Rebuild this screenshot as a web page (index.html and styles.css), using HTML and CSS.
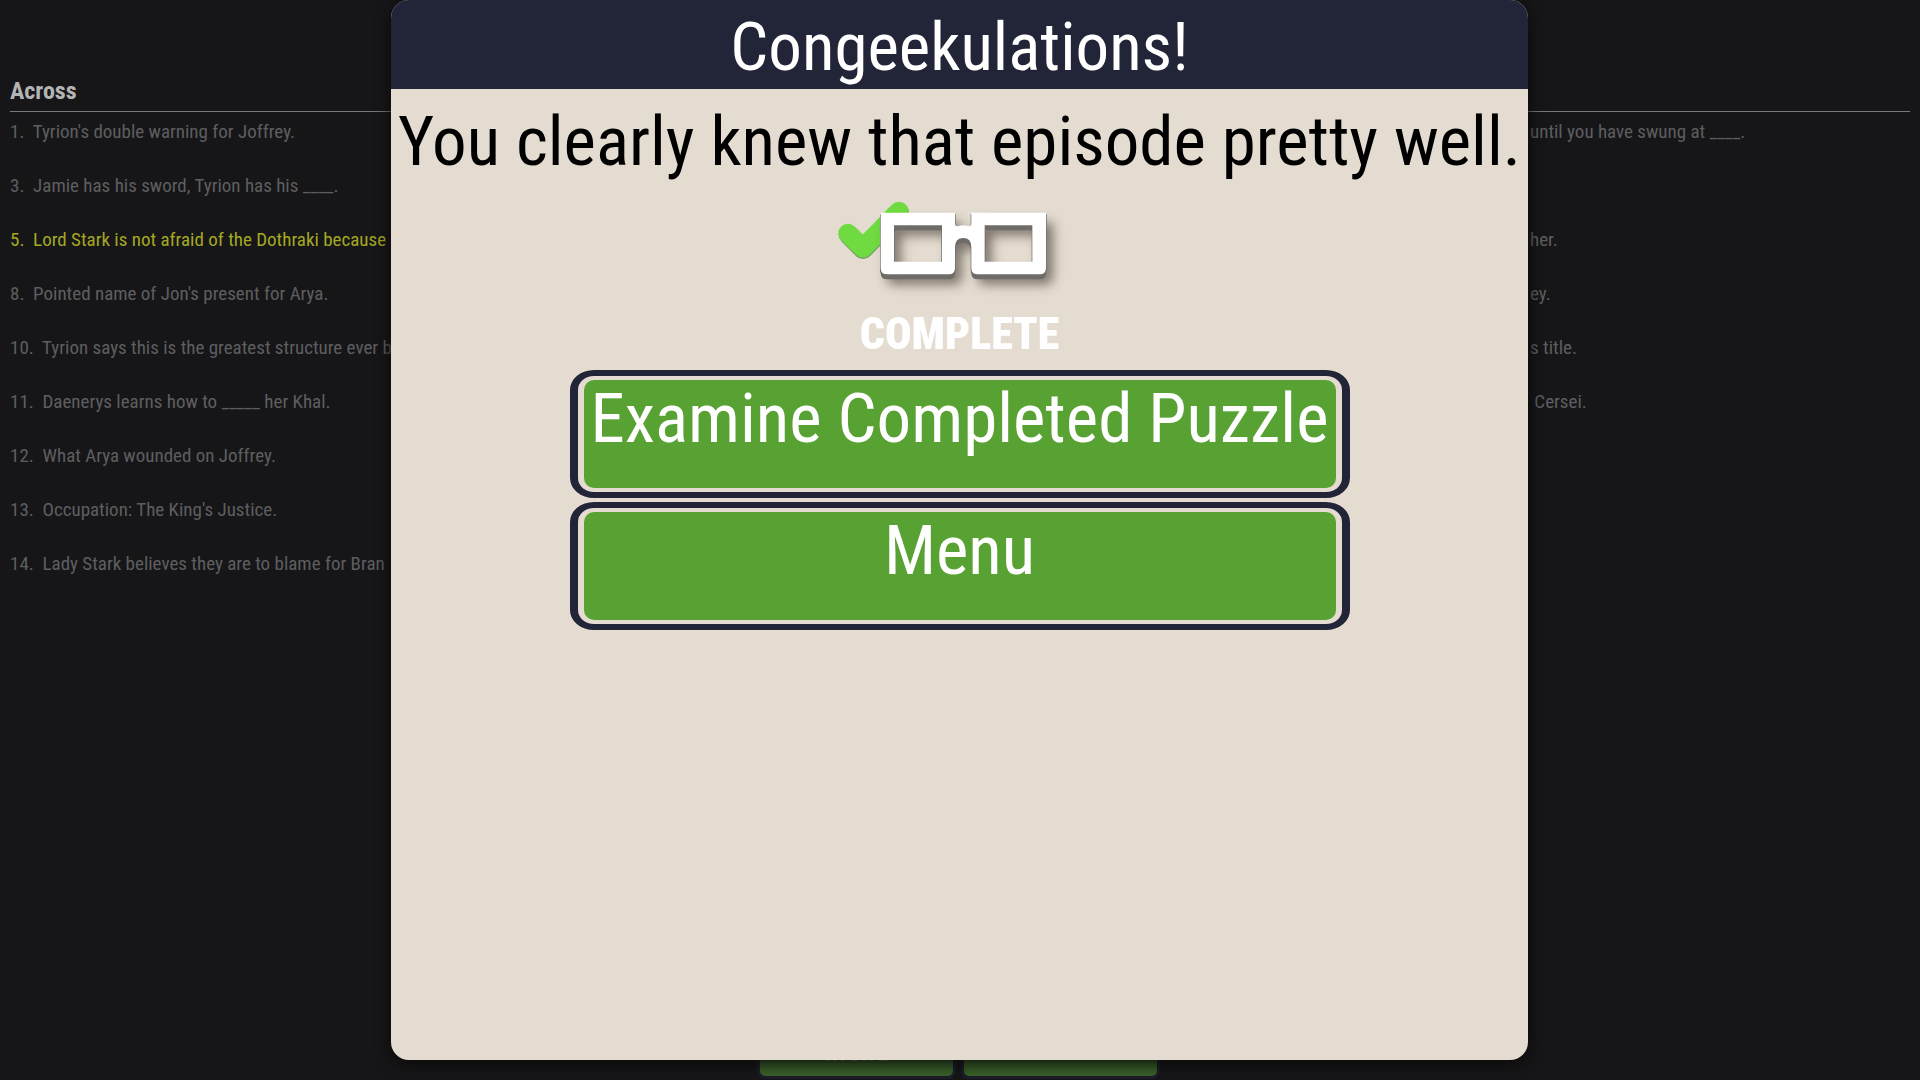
FILE: index.html
```
<!DOCTYPE html>
<html lang="en">
<head>
    <meta charset="UTF-8">
    <meta name="viewport" content="width=device-width, initial-scale=1.0">
    <title>Crossword</title>
    <link rel="stylesheet" href="styles.css">
</head>
<body>
    <main class="puzzle">
        <h2 class="clues_title">Across</h2>
        <div class="clues">
            <ul class="clue_list">
                <li>1.  Tyrion's double warning for Joffrey.</li>
                <li>3.  Jamie has his sword, Tyrion has his ____.</li>
                <li class="active">5.  Lord Stark is not afraid of the Dothraki because</li>
                <li>8.  Pointed name of Jon's present for Arya.</li>
                <li>10.  Tyrion says this is the greatest structure ever b</li>
                <li>11.  Daenerys learns how to _____ her Khal.</li>
                <li>12.  What Arya wounded on Joffrey.</li>
                <li>13.  Occupation: The King's Justice.</li>
                <li>14.  Lady Stark believes they are to blame for Bran</li>
            </ul>
            <ul class="clue_list">
                <li>until you have swung at ____.</li>
                <li></li>
                <li>her.</li>
                <li>ey.</li>
                <li>s title.</li>
                <li> Cersei.</li>
            </ul>
        </div>
    </main>

    <div class="toolbar">
        <button class="tool" type="button">Menu</button>
        <button class="tool" type="button"></button>
    </div>

    <div class="popup" role="dialog" aria-labelledby="popup_title">
        <h1 class="popup_title" id="popup_title">Congeekulations!</h1>
        <div class="popup_body">
            <p class="message">You clearly knew that episode pretty well.</p>
            <svg class="badge" viewBox="28 9 780 381" aria-hidden="true">
                <defs>
                    <filter id="soft" x="-20%" y="-20%" width="150%" height="160%">
                        <feGaussianBlur stdDeviation="18"/>
                    </filter>
                    <path id="glasses" fill-rule="evenodd" d="M180 98H403V130Q403 141 413 138Q428 134 442 138Q452 141 452 130V98H676V263Q676 283 656 283H472Q452 283 452 263V202Q452 174 428 174Q403 174 403 202V263Q403 283 383 283H200Q180 283 180 263ZM220 136V245H364V136ZM492 136V245H635V136Z"/>
                </defs>
                <g fill="none" stroke-width="58" stroke-linecap="round" stroke-linejoin="round">
                    <path d="M83 164L127 208L236 98" stroke="#6f9a62"/>
                    <path d="M82 160L127 204L235 94" stroke="#6fdb40"/>
                </g>
                <use href="#glasses" x="20" y="30" fill="#4a4038" opacity=".7" filter="url(#soft)"/>
                <g fill="#6e6c69">
                    <use href="#glasses" x="-2" y="5"/>
                    <use href="#glasses" x="2" y="5"/>
                    <use href="#glasses" y="10"/>
                    <use href="#glasses" y="15"/>
                </g>
                <use href="#glasses" fill="#fff"/>
            </svg>
            <p class="complete">COMPLETE</p>
            <div class="choices">
                <button class="choice" type="button">Examine Completed Puzzle</button>
                <button class="choice" type="button">Menu</button>
            </div>
        </div>
    </div>
</body>
</html>
```
FILE: styles.css
```
* {
  margin: 0;
  padding: 0;
  box-sizing: border-box;
}

body {
  height: 100vh;
  overflow: hidden;
  background-color: #161618;
  color: #5e5e60;
  font-family: "Roboto Condensed", Roboto, sans-serif;
}

/* puzzle behind the popup */
.puzzle {
  padding: 76px 10px 0;
}

.clues_title {
  padding-bottom: 5px;
  border-bottom: 1px solid #777778;
  color: #b4b4b5;
  font-size: 24px;
  line-height: 30px;
}

.clues {
  display: grid;
  grid-template-columns: 80% 1fr;
}

.clue_list {
  list-style: none;
  font-size: 19px;
  line-height: 40px;
}

.clue_list li {
  height: 40px;
  margin-bottom: 14px;
  white-space: pre;
}

.clue_list .active {
  color: #a4a822;
}

.toolbar {
  position: fixed;
  bottom: 1px;
  left: 0;
  right: 3px;
  display: flex;
  justify-content: center;
  gap: 5px;
}

.tool {
  display: flex;
  justify-content: center;
  width: 199px;
  height: 64px;
  padding: 15px 0;
  border: 3px solid #1c1c2c;
  border-radius: 8px;
  background-color: #3a6329;
  color: #8a9a84;
  font-family: inherit;
  font-size: 30px;
  line-height: 36px;
}

.popup {
  position: fixed;
  top: 0;
  left: 0;
  right: 1px;
  width: 1137px;
  max-width: 100%;
  height: calc(100vh - 20px);
  margin: 0 auto;
  border-radius: 18px;
  background-color: #e4dcd0;
  box-shadow: 0 4px 16px #0a0a0a;
  overflow: hidden;
}

.popup_title {
  padding-top: 5px;
  background-color: #212537;
  color: #fff;
  font-size: 67px;
  font-weight: 400;
  line-height: 84px;
  text-align: center;
}

.popup_body {
  display: flex;
  flex-direction: column;
  align-items: center;
  padding-top: 11px;
}

.message {
  color: #000;
  font-size: 69px;
  line-height: 83px;
  white-space: nowrap;
}

.badge {
  width: 260px;
  height: 127px;
}

.complete {
  color: #fff;
  font-size: 44px;
  font-weight: 900;
  line-height: 48px;
}

.choices {
  display: flex;
  flex-direction: column;
  gap: 4px;
  padding-top: 12px;
}

.choice {
  display: flex;
  justify-content: center;
  width: 780px;
  height: 128px;
  padding: 4px 6px;
  border: 6px solid #212537;
  border-width: 6px 8px;
  border-radius: 24px / 20px;
  background-color: #58a133;
  background-clip: content-box;
  color: #fff;
  font-family: inherit;
  font-size: 69px;
  line-height: 77px;
}
```
